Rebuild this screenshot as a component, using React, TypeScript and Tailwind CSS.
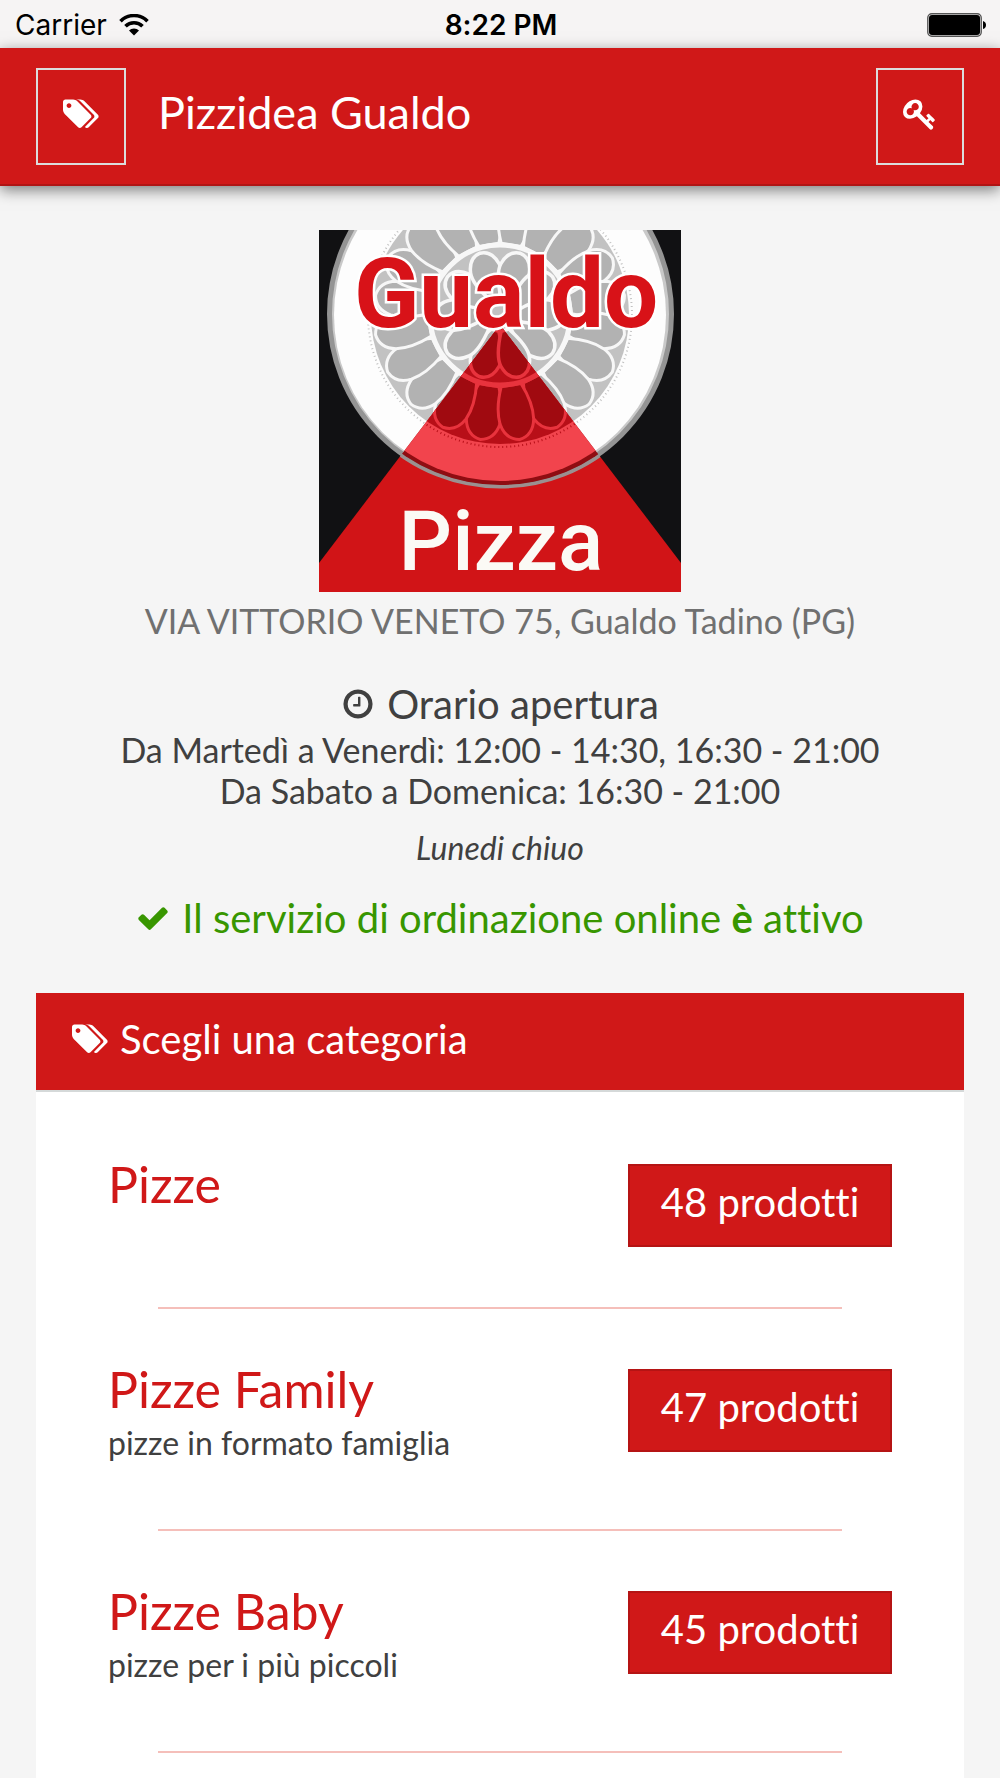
import React from 'react'

type Category = {
    name: string;
    description?: string;
    products: number;
}

const categories: Category[] = [
    { name: 'Pizze', products: 48 },
    { name: 'Pizze Family', description: 'pizze in formato famiglia', products: 47 },
    { name: 'Pizze Baby', description: 'pizze per i più piccoli', products: 45 },
];

function TagsIcon() {
    return (
        <svg viewBox="0 0 1920 1792" className="h-[34px] w-9 shrink-0 fill-current" aria-hidden="true">
            <path d="M448 448q0-53-37.5-90.5t-90.5-37.5-90.5 37.5-37.5 90.5 37.5 90.5 90.5 37.5 90.5-37.5 37.5-90.5zm1067 576q0 53-37 90l-491 492q-39 37-91 37-53 0-90-37l-715-716q-38-37-64.5-101t-26.5-117v-416q0-52 38-90t90-38h416q53 0 117 26.5t102 64.5l715 714q37 39 37 91zm384 0q0 53-37 90l-491 492q-39 37-91 37-36 0-59-14t-53-45l470-470q37-37 37-90 0-52-37-91l-715-714q-38-38-102-64.5t-117-26.5h224q53 0 117 26.5t102 64.5l715 714q37 39 37 91z" />
        </svg>
    );
}

function KeyIcon() {
    return (
        <svg viewBox="0 0 1792 1792" className="size-[34px] fill-current" aria-hidden="true">
            <path d="M832 512q0-80-56-136t-136-56-136 56-56 136q0 42 19 83-41-19-83-19-80 0-136 56t-56 136 56 136 136 56 136-56 56-136q0-42-19-83 41 19 83 19 80 0 136-56t56-136zm851 704q0 17-49 66t-66 49q-9 0-28.5-16t-36.5-33-38.5-40-24.5-26l-96 96 220 220q28 28 28 68 0 42-39 81t-81 39q-40 0-68-28l-671-671q-176 131-365 131-163 0-265.5-102.5t-102.5-265.5q0-160 95-313t248-248 313-95q163 0 265.5 102.5t102.5 265.5q0 189-131 365l355 355 96-96q-3-3-26-24.5t-40-38.5-33-36.5-16-28.5q0-17 49-66t66-49q13 0 23 10 6 6 46 44.5t82 79.5 86.5 86 73 78 28.5 41z" />
        </svg>
    );
}

function ClockIcon() {
    return (
        <svg viewBox="0 0 1792 1792" className="size-[34px] fill-current" aria-hidden="true">
            <path d="M1024 544v448q0 14-9 23t-23 9h-320q-14 0-23-9t-9-23v-64q0-14 9-23t23-9h224v-352q0-14 9-23t23-9h64q14 0 23 9t9 23zm416 352q0-148-73-273t-198-198-273-73-273 73-198 198-73 273 73 273 198 198 273 73 273-73 198-198 73-273zm224 0q0 209-103 385.5t-279.5 279.5-385.5 103-385.5-103-279.5-279.5-103-385.5 103-385.5 279.5-279.5 385.5-103 385.5 103 279.5 279.5 103 385.5z" />
        </svg>
    );
}

function CheckIcon() {
    return (
        <svg viewBox="0 0 1792 1792" className="size-[34px] fill-current" aria-hidden="true">
            <path d="M1671 566q0 40-28 68l-724 724-136 136q-28 28-68 28t-68-28l-136-136-362-362q-28-28-28-68t28-68l136-136q28-28 68-28t68 28l294 295 656-657q28-28 68-28t68 28l136 136q28 28 28 68z" />
        </svg>
    );
}

function WifiIcon() {
    return (
        <svg viewBox="0 0 30 22" className="h-[22px] w-[30px]" aria-hidden="true">
            <path d="M1.5 7.2a19 19 0 0 1 27 0" fill="none" stroke="#000" strokeWidth="3.6" />
            <path d="M6.5 12.3a12 12 0 0 1 17 0" fill="none" stroke="#000" strokeWidth="3.6" />
            <path d="M15 21.5l-5-5a7 7 0 0 1 10 0z" />
        </svg>
    );
}

function BatteryIcon() {
    return (
        <svg viewBox="0 0 60 24" className="h-6 w-[60px]" aria-hidden="true">
            <rect x="0.8" y="0.8" width="53.4" height="22.4" rx="4" fill="none" stroke="#555" strokeWidth="1.4" />
            <rect x="2" y="2" width="51" height="20" rx="3" />
            <path d="M56 8q3 1 3 4t-3 4z" />
        </svg>
    );
}

function Rosette({ base, petal, line, rim }: { base: string; petal: string; line: string; rim: string }) {
    const outer = Array.from({ length: 20 }, (_, i) => i * 18 + 9);
    const inner = Array.from({ length: 10 }, (_, i) => i * 36 + 18);

    return (
        <g>
            <circle cx="181" cy="85" r="166" fill={rim} />
            <circle cx="181" cy="85" r="129" fill={base} />
            <circle cx="181" cy="85" r="132" fill="none" stroke={base} strokeWidth="2" strokeDasharray="1 3" />
            {outer.map((angle) => (
                <path
                    key={angle}
                    d="M171 156q-9 21-7 37q3 16 17 18q14-2 17-18q2-16-7-37z"
                    transform={`rotate(${angle} 181 85)`}
                    fill={petal}
                    stroke={line}
                    strokeWidth="3"
                />
            ))}
            <circle cx="181" cy="85" r="70" fill={base} stroke={line} strokeWidth="5" />
            {inner.map((angle) => (
                <path
                    key={angle}
                    d="M177 101q-13 22-11 33q3 15 15 16q12-1 15-16q2-11-11-33z"
                    transform={`rotate(${angle} 181 85)`}
                    fill={petal}
                    stroke={line}
                    strokeWidth="3.5"
                />
            ))}
        </g>
    );
}

function ShopLogo() {
    return (
        <svg viewBox="0 0 362 362" className="size-[362px]" role="img" aria-label="Gualdo Pizza">
            <defs>
                <clipPath id="slice">
                    <path d="M181 95L362 333V362H0V333Z" />
                </clipPath>
            </defs>
            <rect width="362" height="362" fill="#111113" />
            <path d="M181 95L362 333V362H0V333Z" fill="#d11417" />
            <circle cx="181.500" cy="84" r="171" fill="#c9c9c9" stroke="#949494" strokeWidth="5" />
            <Rosette base="#c2c2c2" petal="#b2b2b2" line="#f7f7f7" rim="#fdfdfd" />
            <g clipPath="url(#slice)">
                <circle cx="181.500" cy="84" r="171" fill="#8f0d12" />
                <Rosette base="#b80f18" petal="#a00a10" line="#e8333d" rim="#f2444d" />
                <circle cx="181.500" cy="84" r="173" fill="none" stroke="#9b9090" strokeWidth="3" />
            </g>
            <text
                x="187"
                y="97"
                textAnchor="middle"
                className="fill-[#d81218] stroke-white stroke-[5px] font-['Roboto',sans-serif] text-[96px] font-bold [paint-order:stroke]"
            >
                Gualdo
            </text>
            <text
                x="182"
                y="340"
                textAnchor="middle"
                className="fill-[#fbfaf5] font-['Roboto',sans-serif] text-[84px] font-medium"
            >
                Pizza
            </text>
        </svg>
    );
}

function CategoryRow({ category }: { category: Category }) {
    return (
        <li className="px-[72px] after:mx-[50px] after:block after:h-0.5 after:bg-[#f5bfba]">
            <div className="flex items-start justify-between py-[60px]">
                <div>
                    <h3 className="text-[50px] leading-[40px] text-[#d01818]">{category.name}</h3>
                    {category.description && (
                        <p className="mt-2 text-[32px] leading-[52px]">{category.description}</p>
                    )}
                </div>
                <button
                    type="button"
                    className="h-[83px] w-[264px] border-2 border-[#b51414] bg-[#d01818] pb-2 text-[40px] leading-none text-white"
                >
                    {category.products} prodotti
                </button>
            </div>
        </li>
    );
}

export default function App() {
    return (
        <div className="flex min-h-screen flex-col bg-[#f5f5f5] font-['Lato',sans-serif] text-[#404040] [font-variant-ligatures:none]">
            <div className="grid h-12 grid-cols-3 items-center bg-[#f6f4f4] pr-[13px] pl-[15px] pt-0.5 font-['Inter',sans-serif] text-[28px] leading-none text-black">
                <div className="flex items-center gap-3">
                    <span>Carrier</span>
                    <WifiIcon />
                </div>
                <span className="text-center font-semibold">8:22 PM</span>
                <div className="flex justify-end">
                    <BatteryIcon />
                </div>
            </div>

            <header className="flex h-[138px] items-center border-b-2 border-[#b01414] bg-[#d01818] px-9 text-white shadow-[0_4px_14px_rgba(0,0,0,0.5)]">
                <button
                    type="button"
                    aria-label="Categorie"
                    className="flex h-[97px] w-[90px] items-center justify-center border-2 border-[#dcdcdc] pb-1"
                >
                    <TagsIcon />
                </button>
                <h1 className="grow px-8 pb-2 text-[45px] leading-none">Pizzidea Gualdo</h1>
                <button
                    type="button"
                    aria-label="Accedi"
                    className="flex h-[97px] w-[88px] items-center justify-center border-2 border-[#dcdcdc] pb-1"
                >
                    <KeyIcon />
                </button>
            </header>

            <section className="flex flex-col items-center pt-11 text-center">
                <ShopLogo />
                <p className="text-[34px] leading-[58px] text-[#707070]">
                    VIA VITTORIO VENETO 75, Gualdo Tadino (PG)
                </p>
                <h2 className="mt-[29px] flex items-center gap-3 text-[40px] leading-[50px]">
                    <ClockIcon />
                    Orario apertura
                </h2>
                <p className="text-[34px] leading-[41px]">
                    Da Martedì a Venerdì: 12:00 - 14:30, 16:30 - 21:00
                    <br />
                    Da Sabato a Domenica: 16:30 - 21:00
                </p>
                <p className="mt-4 text-[32px] leading-[42px] italic">Lunedi chiuo</p>
                <p className="mt-6 flex items-center gap-3 text-[40px] leading-[50px] text-[#389600]">
                    <CheckIcon />
                    <span>
                        Il servizio di ordinazione online <b>è</b> attivo
                    </span>
                </p>
            </section>

            <section className="mx-9 mt-[50px] grow bg-white">
                <h2 className="flex h-[99px] items-center gap-3 border-b-2 border-[#d5d9d9] bg-[#d01818] px-9 pb-1.5 text-[40px] text-white">
                    <TagsIcon />
                    Scegli una categoria
                </h2>
                <ul className="pt-3">
                    {categories.map((category) => (
                        <CategoryRow key={category.name} category={category} />
                    ))}
                </ul>
            </section>
        </div>
    );
}
